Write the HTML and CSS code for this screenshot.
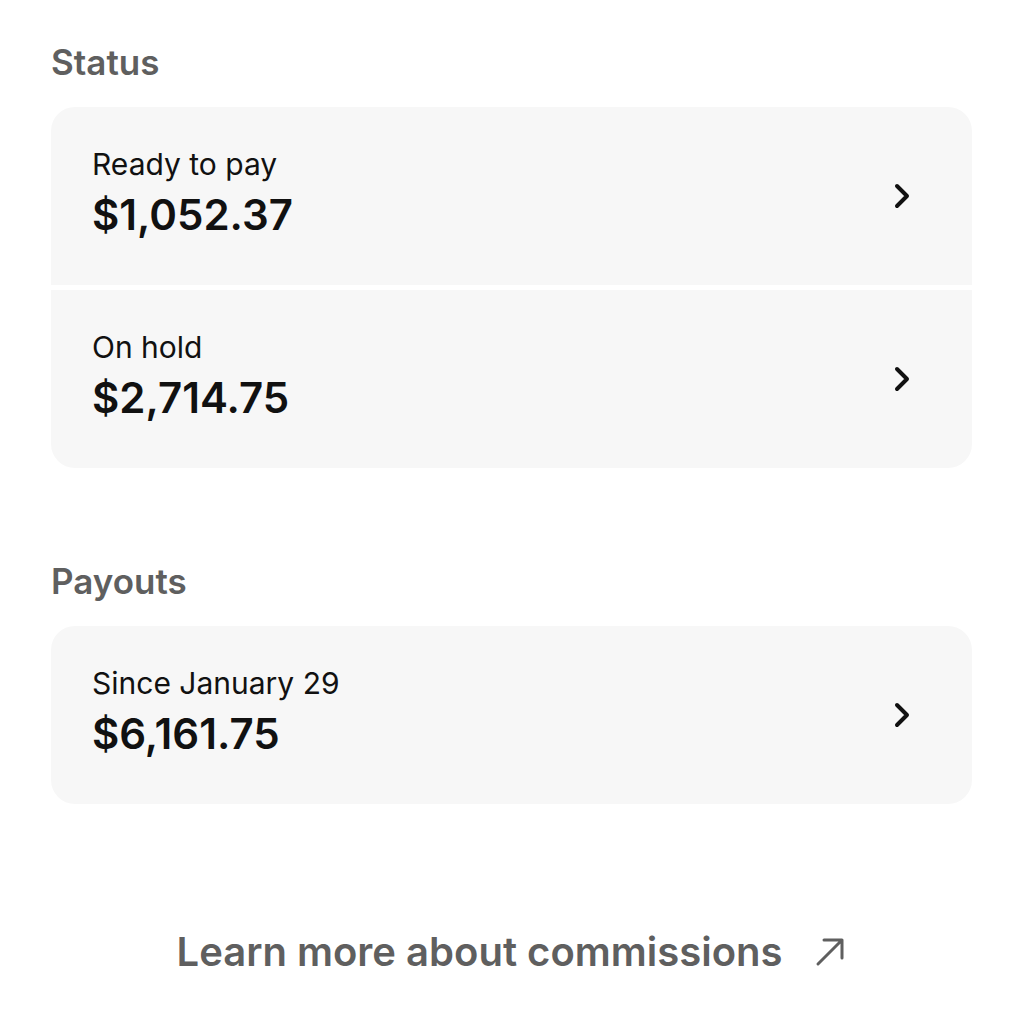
FILE: index.html
```html
<!DOCTYPE html>
<html lang="en">
<head>
  <meta charset="UTF-8" />
  <meta name="viewport" content="width=device-width, initial-scale=1.0"/>
  <title>Earnings</title>
  <link rel="stylesheet" href="styles.css">
</head>
<body>
  <div class="page">
    <section class="section">
      <h2>Status</h2>
      <div class="card">
        <a class="row" href="#">
          <div class="info">
            <span class="label">Ready to pay</span>
            <span class="amount">$1,052.37</span>
          </div>
          <svg class="chevron" viewBox="0 0 16 26" width="16" height="26"><path d="M3 3 L13 13 L3 23" /></svg>
        </a>
        <a class="row" href="#">
          <div class="info">
            <span class="label">On hold</span>
            <span class="amount">$2,714.75</span>
          </div>
          <svg class="chevron" viewBox="0 0 16 26" width="16" height="26"><path d="M3 3 L13 13 L3 23" /></svg>
        </a>
      </div>
    </section>

    <section class="section payouts">
      <h2>Payouts</h2>
      <div class="card">
        <a class="row" href="#">
          <div class="info">
            <span class="label">Since January 29</span>
            <span class="amount">$6,161.75</span>
          </div>
          <svg class="chevron" viewBox="0 0 16 26" width="16" height="26"><path d="M3 3 L13 13 L3 23" /></svg>
        </a>
      </div>
    </section>

    <a class="learn" href="#">
      Learn more about commissions
      <svg class="arrow" viewBox="0 0 32 32" width="32" height="32"><path d="M4 28 L28 4 M10 4 H28 V22" /></svg>
    </a>
  </div>
</body>
</html>
```

FILE: styles.css
```css
body {
  margin: 0;
  font-family: Inter, "Liberation Sans", Arial, sans-serif;
  background: #fff;
  color: #111;
}

.page {
  padding: 39px 52px 0 51px;
}

.section h2 {
  margin: 0 0 22px;
  font-size: 35px;
  font-weight: 600;
  line-height: 46px;
  color: #5f5f5f;
}

.payouts {
  margin-top: 90px;
}

.card {
  display: flex;
  flex-direction: column;
  gap: 5px;
  border-radius: 24px;
  overflow: hidden;
}

.row {
  display: flex;
  align-items: center;
  justify-content: space-between;
  height: 178px;
  padding: 0 62px 0 41px;
  background: #f7f7f7;
  color: #111;
  text-decoration: none;
}

.info {
  display: flex;
  flex-direction: column;
  margin-top: -2px;
}

.label {
  font-size: 30px;
  line-height: 36px;
}

.amount {
  margin-top: 4px;
  font-size: 42px;
  font-weight: 600;
  line-height: 58px;
}

.chevron path {
  fill: none;
  stroke: #111;
  stroke-width: 4;
  stroke-linecap: round;
  stroke-linejoin: round;
}

.learn {
  display: flex;
  justify-content: center;
  align-items: center;
  gap: 32px;
  margin-top: 123px;
  font-size: 40px;
  font-weight: 600;
  color: #5f5f5f;
  text-decoration: none;
}

.arrow path {
  fill: none;
  stroke: #5f5f5f;
  stroke-width: 3;
  stroke-linecap: round;
  stroke-linejoin: round;
}
```
